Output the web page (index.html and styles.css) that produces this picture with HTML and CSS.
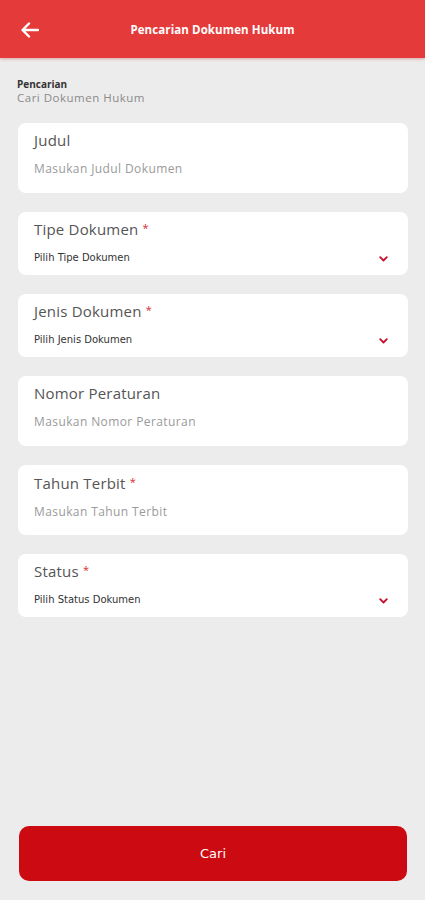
FILE: index.html
```html
<!DOCTYPE html>
<html lang="id">
<head>
<meta charset="utf-8">
<title>Pencarian Dokumen Hukum</title>
<link rel="stylesheet" href="styles.css">
</head>
<body>
<div class="screen">
  <header class="appbar">
    <svg class="back" width="18" height="16" viewBox="0 0 18 16"><path d="M17 8H2M8 1.5L1.5 8 8 14.5" fill="none" stroke="#fff" stroke-width="2.4" stroke-linecap="round" stroke-linejoin="round"/></svg>
    <h1 class="title">Pencarian Dokumen Hukum</h1>
  </header>
  <main class="content">
    <div class="intro">
      <div class="intro-title">Pencarian</div>
      <div class="intro-sub">Cari Dokumen Hukum</div>
    </div>
    <div class="card">
      <div class="label">Judul</div>
      <div class="placeholder">Masukan Judul Dokumen</div>
    </div>
    <div class="card card-select">
      <div class="label">Tipe Dokumen <span class="req">*</span></div>
      <div class="select"><span>Pilih Tipe Dokumen</span><svg class="chev" width="9" height="6" viewBox="0 0 9 6"><path d="M1.2 1.2l3.3 3.3 3.3-3.3" fill="none" stroke="#c8102e" stroke-width="1.8" stroke-linecap="round" stroke-linejoin="round"/></svg></div>
    </div>
    <div class="card card-select">
      <div class="label">Jenis Dokumen <span class="req">*</span></div>
      <div class="select"><span>Pilih Jenis Dokumen</span><svg class="chev" width="9" height="6" viewBox="0 0 9 6"><path d="M1.2 1.2l3.3 3.3 3.3-3.3" fill="none" stroke="#c8102e" stroke-width="1.8" stroke-linecap="round" stroke-linejoin="round"/></svg></div>
    </div>
    <div class="card">
      <div class="label">Nomor Peraturan</div>
      <div class="placeholder">Masukan Nomor Peraturan</div>
    </div>
    <div class="card">
      <div class="label">Tahun Terbit <span class="req">*</span></div>
      <div class="placeholder">Masukan Tahun Terbit</div>
    </div>
    <div class="card card-select">
      <div class="label">Status <span class="req">*</span></div>
      <div class="select"><span>Pilih Status Dokumen</span><svg class="chev" width="9" height="6" viewBox="0 0 9 6"><path d="M1.2 1.2l3.3 3.3 3.3-3.3" fill="none" stroke="#c8102e" stroke-width="1.8" stroke-linecap="round" stroke-linejoin="round"/></svg></div>
    </div>
  </main>
  <footer class="actions">
    <button class="btn">Cari</button>
  </footer>
</div>
</body>
</html>
```
FILE: styles.css
```css
* { box-sizing: border-box; }
html, body { margin: 0; padding: 0; }
body {
  background: #ececec;
  font-family: "Open Sans", "DejaVu Sans", sans-serif;
  color: #444;
}
.screen {
  width: 425px;
  height: 900px;
  display: flex;
  flex-direction: column;
}
.appbar {
  height: 58px;
  background: #e53a3a;
  display: flex;
  align-items: center;
  position: relative;
  box-shadow: 0 1px 3px rgba(180, 30, 30, 0.35);
  flex-shrink: 0;
}
.back {
  margin-left: 21px;
  margin-top: 1px;
}
.title {
  position: absolute;
  left: 0;
  right: 0;
  text-align: center;
  margin: 0;
  font-size: 11.5px;
  font-weight: 700;
  color: #fff;
  letter-spacing: 0.1px;
  pointer-events: none;
}
.content {
  flex: 1;
  padding: 19px 17px 0 18px;
  display: flex;
  flex-direction: column;
  gap: 19px;
}
.intro {
  margin-left: -1px;
  margin-bottom: -1px;
}
.intro-title {
  font-size: 10px;
  font-weight: 700;
  color: #333;
  line-height: 14px;
}
.intro-sub {
  font-size: 11.5px;
  color: #8a8a8a;
  line-height: 14px;
  letter-spacing: 0.5px;
}
.card {
  background: #fff;
  border-radius: 8px;
  padding: 7px 16px 0;
  height: 70px;
}
.card-select {
  height: 63px;
  padding-top: 6px;
}
.label {
  font-size: 15px;
  line-height: 20px;
  color: #555;
  letter-spacing: 0.2px;
}
.req {
  color: #d23030;
  font-size: 11px;
  vertical-align: 3px;
}
.placeholder {
  margin-top: 11px;
  font-size: 12px;
  line-height: 16px;
  color: #9a9a9a;
  letter-spacing: 0.4px;
}
.select {
  margin-top: 12px;
  display: flex;
  align-items: center;
  justify-content: space-between;
  font-family: "DejaVu Sans", sans-serif;
  font-size: 10px;
  line-height: 14px;
  color: #333;
  padding-right: 4px;
}
.chev { margin-top: 1px; }
.actions {
  padding: 0 18px 19px 19px;
  flex-shrink: 0;
}
.btn {
  width: 100%;
  height: 55px;
  border: none;
  border-radius: 10px;
  background: #cc0a12;
  color: #fff;
  font-family: "DejaVu Sans", sans-serif;
  font-size: 13px;
}
```
